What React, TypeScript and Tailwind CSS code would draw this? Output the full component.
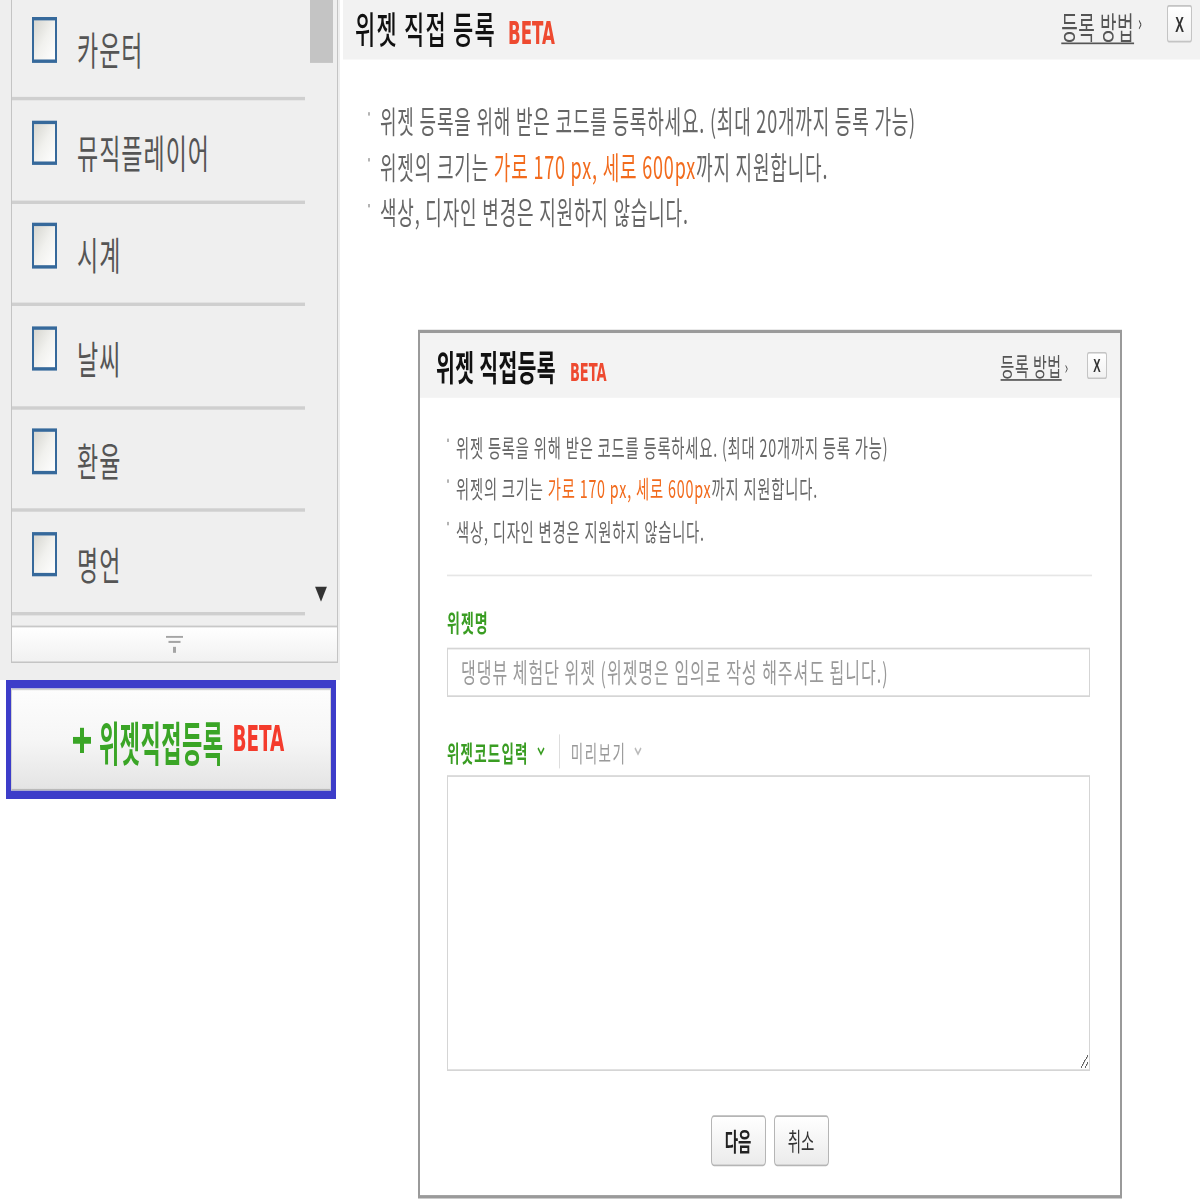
import React from 'react';

const widgets = ['카운터', '뮤직플레이어', '시계', '날씨', '환율', '명언'];

// the reference is drawn tall: lay out at 1x and stretch the page vertically
function Note({ children, small }: { children: React.ReactNode; small?: boolean }) {
  return (
    <li className="flex items-start">
      <span
        className={
          small
            ? 'mt-[7px] mr-[7px] h-[2px] w-[2px] shrink-0 bg-[#b4b4b4]'
            : 'mt-[9px] mr-[10px] h-[2px] w-[2px] shrink-0 bg-[#b4b4b4]'
        }
      />
      <span>{children}</span>
    </li>
  );
}

function Chevron({ color }: { color: string }) {
  return (
    <svg width="8" height="6" viewBox="0 0 8 6" className="shrink-0">
      <path d="M1 1 L4 4.5 L7 1" fill="none" stroke={color} strokeWidth="1.4" />
    </svg>
  );
}

function CloseBox({ big }: { big?: boolean }) {
  return (
    <button
      className={
        big
          ? "flex h-[22px] w-[25px] items-center justify-center rounded-[2px] border border-[#c4c4c4] bg-linear-to-b from-white to-[#f1f1f1] font-['Liberation_Sans',sans-serif] text-[13px] font-bold leading-none text-[#333]"
          : "flex h-[16px] w-[20px] items-center justify-center rounded-[2px] border border-[#c4c4c4] bg-linear-to-b from-white to-[#f1f1f1] font-['Liberation_Sans',sans-serif] text-[11px] font-bold leading-none text-[#333]"
      }
    >
      X
    </button>
  );
}

export default function App() {
  return (
    <div className="h-[1200px] w-[1200px] overflow-hidden bg-white">
      <div className="h-[706px] w-[1200px] origin-top-left scale-y-[1.7] font-['Noto_Sans_CJK_KR','Noto_Sans',sans-serif]">
        <div className="flex">
          {/* widget list */}
          <aside className="w-[340px] shrink-0">
            <div className="bg-[#eeeeee] pb-[10px]">
              <div className="ml-[11px] w-[327px] border-x border-b border-[#c4c4c4] bg-[#efefef]">
                <div className="flex h-[368px]">
                  <div className="w-[293px] overflow-hidden">
                    <ul className="-mt-[1.6px]">
                      {widgets.map((w) => (
                        <li
                          key={w}
                          className="flex h-[60.6px] items-start gap-[20px] border-b-2 border-[#cfcfcf] pt-[11.6px] pl-[20px]"
                        >
                          <span className="block h-[26.5px] w-[25px] shrink-0 border-2 border-[#36699b] bg-linear-to-br from-[#d6d6d0] via-[#f1f1ee] to-white" />
                          <span className="mt-[7px] text-[23px] leading-[23px] tracking-[1px] text-[#555]">{w}</span>
                        </li>
                      ))}
                    </ul>
                  </div>
                  <div className="flex flex-1 flex-col items-center justify-between pb-[14px]">
                    <div className="h-[37px] w-[23px] bg-[#c4c4c4]" />
                    <svg width="12" height="9" viewBox="0 0 12 9">
                      <polygon points="0,0 12,0 6,9" fill="#333" />
                    </svg>
                  </div>
                </div>
                <div className="flex h-[21px] justify-center border-t border-[#c8c8c8] bg-linear-to-b from-white to-[#f1f1f1] pt-[5px]">
                  <svg width="17" height="11" viewBox="0 0 17 11">
                    <rect x="0" y="0" width="17" height="1.2" fill="#a4a4a4" />
                    <rect x="2.5" y="3" width="12" height="1.2" fill="#a4a4a4" />
                    <rect x="7" y="6.5" width="3" height="3.5" fill="#a4a4a4" />
                  </svg>
                </div>
              </div>
            </div>
            <div className="ml-[6px] h-[70px] w-[330px] border-[5px] border-[#3d3dc9]">
              <button className="flex h-full w-full items-center border border-[#d2d2d2] border-b-[#b9b9b9] bg-linear-to-b from-[#fdfdfd] via-[#f6f6f6] to-[#e4e4e4] pl-[61px]">
                <svg width="18" height="15" viewBox="0 0 18 15" className="shrink-0">
                  <rect x="7" y="0" width="4" height="15" fill="#3aa526" />
                  <rect x="0" y="5.5" width="18" height="4" fill="#3aa526" />
                </svg>
                <span className="ml-[8px] inline-block scale-y-[1.25] text-[22px] leading-[24px] font-bold tracking-[0.5px] text-[#3aa526]">
                  위젯직접등록
                </span>
                <span className="ml-[9px] font-['DejaVu_Sans_Condensed','DejaVu_Sans',sans-serif] text-[20.5px] leading-[24px] font-bold text-[#f43b2c] [font-stretch:condensed]">
                  BETA
                </span>
              </button>
            </div>
          </aside>

          {/* register widget */}
          <main className="min-w-0 flex-1">
            <header className="ml-[3px] flex h-[35.3px] items-start bg-[#f2f2f2] pt-[4px] pr-[8px] pl-[12px]">
              <div className="flex items-baseline">
                <h1 className="text-[22px] leading-[24px] font-medium tracking-[1.2px] text-[#111]">위젯 직접 등록</h1>
                <span className="ml-[12px] font-['DejaVu_Sans_Condensed','DejaVu_Sans',sans-serif] text-[18.5px] leading-[22px] font-bold text-[#ee4a30] [font-stretch:condensed]">
                  BETA
                </span>
              </div>
              <div className="ml-auto flex items-start">
                <a className="text-[18px] leading-[22px] tracking-[0.5px] text-[#555] underline underline-offset-2">등록 방법</a>
                <span className="ml-[4px] text-[13px] leading-[18px] text-[#444]">›</span>
                <div className="-mt-[1px] ml-[25px]">
                  <CloseBox big />
                </div>
              </div>
            </header>

            <ul className="mt-[22px] pl-[28px] text-[18px] leading-[26.8px] tracking-[0.8px] text-[#666]">
              <Note>위젯 등록을 위해 받은 코드를 등록하세요. (최대 20개까지 등록 가능)</Note>
              <Note>
                위젯의 크기는 <span className="text-[#f26b1d]">가로 170 px, 세로 600px</span>까지 지원합니다.
              </Note>
              <Note>색상, 디자인 변경은 지원하지 않습니다.</Note>
            </ul>

            <section className="mt-[56.6px] ml-[78px] w-[704px] border-2 border-[#9a9a9a] pb-[17.4px]">
              <div className="flex h-[38px] items-center bg-[#f3f3f3] pr-[13px] pl-[16px]">
                <div className="flex items-baseline">
                  <h2 className="text-[20.5px] leading-[22px] font-bold tracking-[0.3px] text-[#111]">위젯 직접등록</h2>
                  <span className="ml-[14px] font-['DejaVu_Sans_Condensed','DejaVu_Sans',sans-serif] text-[14.5px] leading-[16px] font-bold text-[#ee4a30] [font-stretch:condensed]">
                    BETA
                  </span>
                </div>
                <div className="ml-auto flex items-center">
                  <a className="text-[15px] leading-[18px] tracking-[0.5px] text-[#555] underline underline-offset-2">등록 방법</a>
                  <span className="ml-[3px] text-[11px] leading-[14px] text-[#444]">›</span>
                  <div className="ml-[19px]">
                    <CloseBox />
                  </div>
                </div>
              </div>

              <div className="pt-[16.7px] pr-[28px] pl-[27px]">
                <ul className="text-[14.3px] leading-[24.4px] tracking-[0.8px] text-[#666]">
                  <Note small>위젯 등록을 위해 받은 코드를 등록하세요. (최대 20개까지 등록 가능)</Note>
                  <Note small>
                    위젯의 크기는 <span className="text-[#f26b1d]">가로 170 px, 세로 600px</span>까지 지원합니다.
                  </Note>
                  <Note small>색상, 디자인 변경은 지원하지 않습니다.</Note>
                </ul>

                <div className="mt-[14px] border-t border-[#e6e6e6]" />

                <p className="mt-[17px] text-[14px] leading-[20px] font-bold tracking-[1px] text-[#3a9d23]">위젯명</p>
                <input
                  className="mt-[4.6px] block h-[29px] w-[643px] border border-[#d5d5d5] px-[13px] text-[16px] tracking-[1px] outline-none placeholder:text-[#9a9a9a]"
                  placeholder="댕댕뷰 체험단 위젯 (위젯명은 임의로 작성 해주셔도 됩니다.)"
                />

                <div className="mt-[22.4px] flex h-[20px] items-center">
                  <span className="text-[13.5px] leading-[20px] font-bold tracking-[1.2px] text-[#3a9d23]">위젯코드입력</span>
                  <span className="ml-[8px]">
                    <Chevron color="#3a9d23" />
                  </span>
                  <span className="ml-[14px] h-[20px] w-px bg-[#dddddd]" />
                  <span className="ml-[11px] text-[13.5px] leading-[20px] tracking-[1.5px] text-[#999]">미리보기</span>
                  <span className="ml-[8px]">
                    <Chevron color="#bbbbbb" />
                  </span>
                </div>

                <textarea className="mt-[4px] block h-[173.5px] w-[643px] border border-[#d5d5d5] outline-none" />

                <div className="mt-[26.5px] flex justify-center gap-[8px]">
                  <button className="h-[29.4px] w-[55px] rounded-[3px] border border-[#b5b5b5] bg-linear-to-b from-white to-[#ebebeb] text-[14.5px] font-bold text-[#222]">
                    다음
                  </button>
                  <button className="h-[29.4px] w-[55px] rounded-[3px] border border-[#b5b5b5] bg-linear-to-b from-white to-[#ebebeb] text-[14.5px] text-[#333]">
                    취소
                  </button>
                </div>
              </div>
            </section>
          </main>
        </div>
      </div>
    </div>
  );
}
